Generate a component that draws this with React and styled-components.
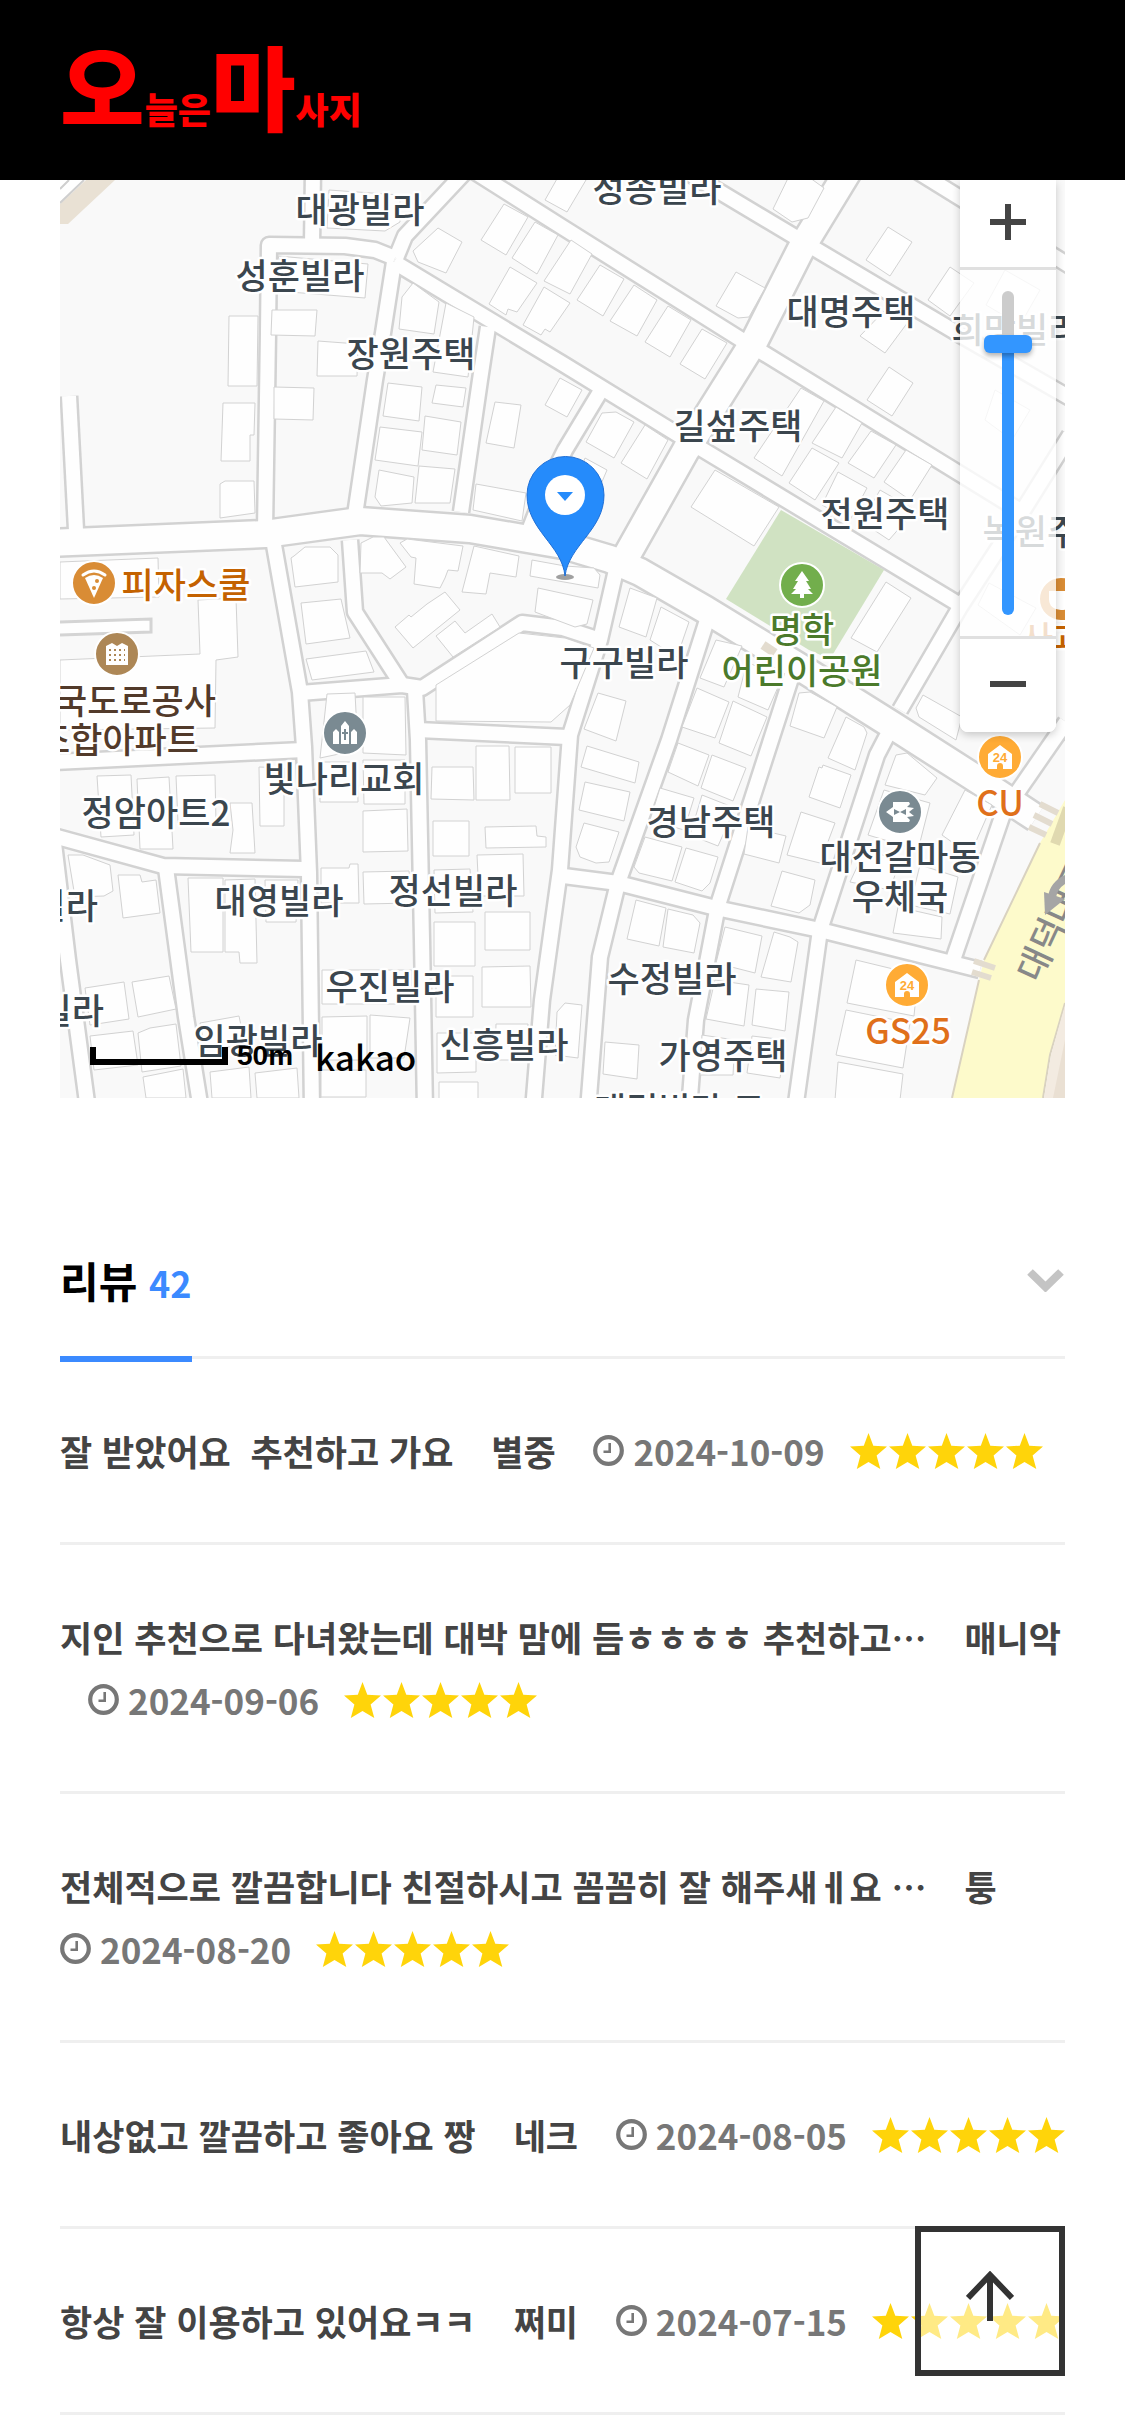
import React, { useState } from 'react'
import styled, { createGlobalStyle } from 'styled-components'

const colors = {
    brand: '#ff0000',
    blue: '#3b8aff',
    zoomBlue: '#3396ff',
    dark: '#333',
    text: '#444',
    grey: '#777',
    line: '#efefef',
    star: '#ffd40a',
    label: '#3b464e',
}

const fontStack = "'Noto Sans CJK KR', 'Noto Sans', sans-serif"

const GlobalStyle = createGlobalStyle`
    * {
        box-sizing: border-box;
    }

    body {
        margin: 0;
        background: #fff;
        color: ${colors.text};
        font-family: ${fontStack};
    }

    button {
        font-family: inherit;
        cursor: pointer;
    }
`

const Header = styled.header`
    position: sticky;
    top: 0;
    z-index: 10;
    height: 180px;
    padding: 12px 60px 0;
    display: flex;
    align-items: center;
    background: #000;
`

const Logo = styled.a`
    display: flex;
    align-items: baseline;
    color: ${colors.brand};
    font-size: 36px;
    font-weight: 900;
    line-height: 90px;
    text-decoration: none;
`

const LogoBig = styled.span`
    font-size: 92px;
`

const Main = styled.main`
    padding: 0 60px 24px;
`

const MapBox = styled.section`
    position: relative;
    overflow: hidden;
`

const MapDrawing = styled.svg`
    display: block;
    width: 100%;
    height: auto;
    background: #f9f9f9;
`

const MapLabel = styled.text`
    font-family: ${fontStack};
    font-size: 35px;
    font-weight: 500;
    fill: ${props => props.$color || colors.label};
    stroke: #fff;
    stroke-width: 5px;
    stroke-linejoin: round;
    paint-order: stroke;
    text-anchor: ${props => props.$anchor || 'middle'};
`

const ShopNumber = styled.text`
    font-family: 'Liberation Sans', sans-serif;
    font-size: 13px;
    font-weight: 700;
    fill: #ffab35;
    text-anchor: middle;
`

const ZoomPanel = styled.div`
    position: absolute;
    top: 0;
    right: 9px;
    width: 96px;
    display: flex;
    flex-direction: column;
    overflow: hidden;
    background: rgba(255, 255, 255, 0.8);
    border-radius: 0 0 8px 8px;
    box-shadow: 0 3px 8px rgba(0, 0, 0, 0.2);
`

const ZoomButton = styled.button`
    height: ${props => props.$tall ? 93 : 87}px;
    padding: 0 0 3px;
    display: flex;
    align-items: center;
    justify-content: center;
    background: #fff;
    border: 0;
`

const ZoomTrack = styled.div`
    padding: 21px 0;
    display: flex;
    justify-content: center;
    border: solid #e0e0e0;
    border-width: 3px 0;
`

const ZoomRange = styled.input`
    appearance: none;
    writing-mode: vertical-lr;
    direction: rtl;
    width: 48px;
    height: 324px;
    margin: 0;
    background: transparent;

    &::-webkit-slider-runnable-track {
        width: 12px;
        height: 324px;
        border-radius: 6px;
        background: linear-gradient(to top, ${colors.zoomBlue} var(--level), #ccc var(--level));
    }

    &::-webkit-slider-thumb {
        appearance: none;
        width: 48px;
        height: 18px;
        margin-left: -18px;
        border-radius: 6px;
        background: ${colors.zoomBlue};
        box-shadow: 0 3px 5px rgba(0, 0, 0, 0.3);
    }
`

const MapFooter = styled.div`
    position: absolute;
    left: 30px;
    bottom: 20px;
    display: flex;
    align-items: center;
    color: #000;
`

const ScaleBar = styled.span`
    width: 138px;
    height: 18px;
    border: solid #000;
    border-width: 0 6px 6px;
`

const ScaleText = styled.span`
    margin: 0 22px 0 9px;
    font-family: 'Liberation Sans', sans-serif;
    font-size: 28px;
    font-weight: 700;
`

const MapBrand = styled.span`
    font-size: 35px;
    font-weight: 500;
    line-height: 45px;
`

const Reviews = styled.section`
    margin-top: 102px;
`

const ReviewsHead = styled.div`
    padding-top: 48px;
    display: flex;
    align-items: flex-start;
    justify-content: space-between;
    border-bottom: 3px solid ${colors.line};
`

const ReviewsTitle = styled.h2`
    margin: 0 0 -6px;
    padding-bottom: 42px;
    border-bottom: 6px solid ${colors.blue};
    color: #000;
    font-size: 42px;
    font-weight: 700;
    line-height: 63px;
`

const ReviewsCount = styled.span`
    color: ${colors.blue};
    font-size: 36px;
`

const FoldButton = styled.button`
    height: 63px;
    padding: 0;
    display: flex;
    align-items: center;
    background: none;
    border: 0;
`

const ReviewList = styled.ul`
    margin: 0;
    padding: 0;
    list-style: none;
`

const ReviewRow = styled.li`
    padding: 60px 0;
    border-bottom: 3px solid ${colors.line};
    font-size: 35px;
    font-weight: 700;
    line-height: 63px;
`

const ReviewLink = styled.a`
    color: ${colors.text};
    text-decoration: none;
    white-space: pre-wrap;
`

const Gap = styled.span`
    display: inline-block;
    width: 28px;
`

const ReviewDate = styled.time`
    display: inline-flex;
    align-items: center;
    gap: 9px;
    margin-right: 25px;
    color: ${colors.grey};
    vertical-align: top;
    white-space: nowrap;
`

const Stars = styled.span`
    display: inline-flex;
    align-items: center;
    gap: 2px;
    height: 63px;
    margin-right: -8px;
    vertical-align: top;
`

const TopButton = styled.button`
    position: fixed;
    right: 60px;
    bottom: 60px;
    width: 150px;
    height: 150px;
    padding: 0 0 10px;
    display: flex;
    align-items: center;
    justify-content: center;
    background: rgba(255, 255, 255, 0.5);
    border: 6px solid ${colors.dark};
`

// centre lines of the streets, grouped by width
const streets = [
    { width: 16, lines: [
        '313,170 312,246',
        '265,530 268,333 269,245 345,246 375,250 395,258',
        '465,172 405,236 396,258',
        '394,262 383,333 375,380 355,515',
        '488,327 480,380 461,512',
        '69,396 76,530',
        '600,392 565,450 545,490 530,528',
        '274,545 300,692 304,747 309,873 312,1110',
        '350,540 355,612 402,685',
        '300,693 402,685 422,688 522,623 563,628 600,640',
        '415,690 418,740 422,940 425,1110',
        '418,730 567,737',
        '55,762 303,750',
        '50,835 163,866 304,869',
        '53,835 68,960 88,1110',
        '166,868 186,1017 201,1110',
        '616,570 600,640 570,735 560,870 542,1000 533,1110',
        '556,875 618,883 716,908 820,930 980,970',
        '707,620 669,740 618,883 600,957 588,1110',
        '792,675 771,740 718,905 696,1020 689,1110',
        '890,730 877,755 820,930 795,1110',
        '1006,805 953,960',
        '1066,722 1012,800',
        '915,170 1070,266',
        '394,262 563,364 690,442 960,605',
        '475,172 562,227 745,342 765,354 1022,512',
        '650,150 720,192 822,253 957,333 1070,398',
        '1070,435 1022,512 960,607 900,710',
    ] },
    { width: 28, lines: [
        '50,543 265,534 360,521 470,529 563,545 610,559 640,572 706,610 806,671 892,725 975,778 1036,818',
        '627,555 686,450 755,340 802,247 855,160',
    ] },
]

const buildings = [
    '229,316 258,316 257,386 228,386', '272,310 317,310 315,336 271,335', '318,341 358,344 357,376 317,376',
    '274,387 314,388 313,420 274,419', '438,228 462,242 446,273 418,262 413,251', '504,204 528,217 506,255 481,240',
    '535,222 558,235 537,274 512,258', '510,267 537,283 517,312 508,309 506,315 489,304', '544,287 570,303 550,332 545,329 541,335 523,325',
    '571,240 592,254 570,294 544,281', '413,283 439,302 434,334 399,329 402,297', '446,303 474,317 468,377 433,372',
    '329,190 400,195 400,222 385,231 327,228', '278,256 368,264 365,298 290,292', '223,403 255,403 254,435 250,435 250,461 221,461',
    '220,484 225,481 254,481 255,513 220,518', '388,383 422,387 419,421 383,416', '380,427 422,432 418,466 375,460',
    '425,416 461,422 457,455 422,450', '379,470 414,477 412,503 381,506 375,497', '419,466 455,469 450,503 415,503',
    '436,385 466,388 463,407 432,403', '495,402 521,405 514,448 486,443', '476,484 526,493 522,521 473,510',
    '294,556 305,547 330,547 338,555 338,582 295,587 291,558', '301,603 341,599 350,638 306,644', '306,659 366,651 374,672 312,680',
    '361,543 373,537 384,537 406,567 390,579 382,573 360,573', '400,543 407,539 463,546 458,571 448,570 445,578 440,588 414,584 416,558 411,557',
    '474,546 519,556 516,577 490,573 486,594 462,592', '445,592 460,610 413,648 395,627 409,615 411,617 427,604',
    '436,636 455,621 465,633 492,614 500,627 453,657', '532,560 565,566 594,568 600,575 598,588 530,576',
    '538,588 593,600 587,624 575,627 535,612', '436,685 519,633 565,638 594,648 570,705 551,722 436,721',
    '363,697 405,697 406,755 363,753', '327,694 355,693 358,750 320,758', '97,776 131,775 134,835 101,837', '137,779 169,777 173,849 140,849',
    '176,776 215,775 216,823 178,823', '230,803 252,803 255,853 230,853 233,830', '259,767 284,768 284,826 260,826',
    '320,762 357,762 358,802 320,802', '363,811 407,809 408,851 363,852', '363,760 405,760 405,804 364,804',
    '321,868 349,868 350,864 358,864 359,903 321,903', '363,872 409,871 411,903 364,904', '432,767 473,767 474,800 431,799',
    '476,746 509,746 510,800 476,800', '515,747 551,747 551,793 515,793', '433,821 469,821 469,856 433,856',
    '485,827 536,826 537,836 546,837 546,847 486,848', '477,855 523,854 524,896 479,896', '434,870 470,869 473,912 435,913',
    '485,912 530,912 530,950 485,950', '434,922 475,922 475,966 434,966', '482,967 530,966 531,1007 482,1007',
    '436,976 473,976 473,1017 436,1017', '437,1033 476,1033 476,1072 437,1073', '439,1082 478,1082 478,1100 439,1100',
    '496,1024 528,1024 526,1060 495,1060', '565,1003 582,1005 578,1058 555,1055 557,1012', '322,970 412,970 412,1004 322,1004',
    '322,1017 367,1016 367,1060 322,1060', '370,1015 410,1018 404,1058 370,1058', '321,1070 366,1070 366,1097 321,1097',
    '188,878 223,878 223,952 191,952', '225,880 255,879 257,963 240,963 239,952 225,952', '265,880 298,880 296,922 266,922',
    '68,855 83,855 110,865 113,891 104,896 75,897', '118,875 140,875 142,882 156,880 160,913 123,918', '85,988 124,982 129,1019 90,1025',
    '132,982 169,976 176,1009 138,1017', '90,1036 133,1031 138,1065 94,1070', '138,1033 150,1028 176,1024 181,1066 142,1072',
    '143,1077 183,1069 186,1098 146,1098', '210,1072 249,1067 251,1098 212,1098', '255,1073 297,1068 299,1098 257,1098',
    '200,1023 239,1016 245,1045 205,1050', '792,170 806,175 824,188 808,218 792,222 773,209', '562,170 586,180 567,212 545,200',
    '888,227 912,242 890,276 866,260', '736,272 765,288 749,317 738,318 716,306', '885,310 908,322 885,353 860,336',
    '889,367 913,383 892,416 867,400', '950,267 974,283 950,316 928,300', '600,265 624,279 603,316 577,300',
    '634,285 657,300 637,336 610,321', '668,306 691,320 670,357 645,342', '702,329 727,343 705,379 680,364',
    '560,378 582,390 567,417 545,405', '602,413 616,412 634,422 614,458 586,442', '645,425 668,440 647,479 621,463',
    '801,388 824,401 782,476 754,458', '836,407 862,423 842,458 812,443', '871,431 896,445 874,478 848,463',
    '812,448 839,463 815,500 789,483', '906,450 932,465 910,500 884,482', '838,472 867,488 850,520 822,505',
    '715,470 779,507 754,546 691,507', '880,490 915,510 889,540 862,522', '585,458 607,470 590,510 570,500',
    '886,582 911,598 877,652 851,638', '630,588 657,598 646,637 619,627', '661,607 689,622 677,657 650,640',
    '716,640 742,646 724,687 700,678', '747,662 782,678 768,710 738,697', '598,693 626,701 616,741 584,729',
    '587,746 639,762 635,783 581,767', '585,782 630,792 624,821 579,810', '584,823 619,832 609,862 596,863 580,857 576,847',
    '697,688 729,702 715,738 682,727', '733,701 767,717 751,756 719,743', '678,743 709,755 698,786 668,772',
    '712,755 746,768 733,801 701,788', '660,788 694,798 684,830 650,820', '702,795 735,808 718,846 690,835',
    '645,837 682,847 672,881 639,873 634,867', '686,848 718,857 710,883 702,891 675,882', '810,692 837,707 824,738 790,726 799,693',
    '846,717 864,727 867,733 855,770 828,758', '819,767 822,768 823,765 851,775 840,808 809,797', '748,827 786,836 779,863 744,854',
    '801,812 835,823 820,863 787,855', '782,871 815,880 810,905 799,913 771,906', '896,755 907,753 937,778 925,795 885,785',
    '884,790 930,803 918,850 868,835', '965,790 992,805 970,855 942,835', '865,850 900,860 890,890 850,882',
    '920,865 958,877 950,914 910,905', '898,907 942,917 941,939 893,933', '636,900 666,908 659,946 627,939',
    '668,909 693,915 700,923 694,953 663,947', '725,927 762,936 755,973 716,963', '774,932 790,937 798,942 791,982 761,977',
    '715,980 749,985 744,1026 706,1019', '756,989 789,992 785,1031 752,1025', '605,1042 639,1045 637,1079 603,1074',
    '752,1036 786,1040 780,1078 747,1073', '702,1035 735,1040 733,1075 700,1075', '856,960 918,975 914,1016 847,1003',
    '846,1010 910,1023 903,1068 836,1055', '838,1062 903,1074 900,1100 835,1100', '923,695 962,717 956,740 919,717 916,708',
    '989,583 1036,608 1020,635 978,605', '1005,270 1040,290 1020,325 986,305', '995,390 1030,410 1012,440 985,420',
]

const places = [
    { name: '대광빌라', x: 360, y: 223 },
    { name: '성훈빌라', x: 300, y: 289 },
    { name: '장원주택', x: 411, y: 367 },
    { name: '성송빌라', x: 657, y: 202 },
    { name: '대명주택', x: 851, y: 325 },
    { name: '길섶주택', x: 738, y: 439 },
    { name: '전원주택', x: 885, y: 527 },
    { name: '희망빌라', x: 1016, y: 343 },
    { name: '녹원주택', x: 1047, y: 545 },
    { name: '피자스쿨', x: 186, y: 598, color: '#c46200' },
    { name: '한국도로공사', x: 216, y: 714, color: '#523a2a', anchor: 'end' },
    { name: '조합아파트', x: 199, y: 753, color: '#523a2a', anchor: 'end' },
    { name: '빛나리교회', x: 344, y: 792 },
    { name: '정암아트2', x: 156, y: 826 },
    { name: '대영빌라', x: 279, y: 914 },
    { name: '정선빌라', x: 453, y: 904 },
    { name: '우진빌라', x: 390, y: 1000 },
    { name: '임광빌라', x: 258, y: 1054 },
    { name: '신흥빌라', x: 504, y: 1058 },
    { name: '빌라', x: 98, y: 919, anchor: 'end' },
    { name: '빌라', x: 104, y: 1024, anchor: 'end' },
    { name: '구구빌라', x: 624, y: 676 },
    { name: '명학', x: 802, y: 643, color: '#4b7a2b' },
    { name: '어린이공원', x: 802, y: 684, color: '#4b7a2b' },
    { name: '경남주택', x: 711, y: 835 },
    { name: '대전갈마동', x: 900, y: 870 },
    { name: '우체국', x: 900, y: 910 },
    { name: '수정빌라', x: 672, y: 992 },
    { name: '가영주택', x: 723, y: 1069 },
    { name: '대림빌라 로', x: 594, y: 1123, anchor: 'start' },
    { name: '사과', x: 1021, y: 652, color: '#c46200', anchor: 'start' },
    { name: 'CU', x: 1000, y: 816, color: '#e0701a' },
    { name: 'GS25', x: 908, y: 1044, color: '#e0701a' },
]

const reviews = [
    { title: '잘 받았어요\u00a0 추천하고 가요', author: '별중', date: '2024-10-09' },
    { title: '지인 추천으로 다녀왔는데 대박 맘에 듬ㅎㅎㅎㅎ 추천하고…', author: '매니악', date: '2024-09-06' },
    { title: '전체적으로 깔끔합니다 친절하시고 꼼꼼히 잘 해주새ㅔ요 …', author: '퉁', date: '2024-08-20' },
    { title: '내상없고 깔끔하고 좋아요 짱', author: '네크', date: '2024-08-05' },
    { title: '항상 잘 이용하고 있어요ㅋㅋ', author: '쩌미', date: '2024-07-15' },
]

const Pin = ({ x, y, color, children }) => (
    <g transform={`translate(${x} ${y})`}>
        <circle r="22" fill={color} stroke="#fff" strokeWidth="2" />
        {children}
    </g>
)

const ConvenienceStore = ({ x, y }) => (
    <Pin x={x} y={y} color="#ffab35">
        <path d="M0 -12 L12 -3 V12 H3 V9 A3 3 0 0 0 -3 9 V12 H-12 V-3 Z" fill="#fff" />
        <ShopNumber y="5">24</ShopNumber>
    </Pin>
)

const StreetMap = () => (
    <MapDrawing viewBox="60 180 1005 918" role="img" aria-label="지도">
        {/* town blocks and streets */}
        <polygon points="60,180 86,180 60,204" fill="#fff" />
        <polygon points="86,180 115,180 68,224 60,224 60,204" fill="#e9e1d4" />
        <path d="M60 203 L84 180 M60 189 L69 180" stroke="#cfcfcf" strokeWidth="2" fill="none" />
        {streets.map(group => group.lines.map(line => (
            <polyline key={line} points={line} fill="none" stroke="#d2d2d2" strokeWidth={group.width + 3} strokeLinejoin="round" />
        )))}
        {streets.map(group => group.lines.map(line => (
            <polyline key={line} points={line} fill="none" stroke="#fefefe" strokeWidth={group.width - 2} strokeLinejoin="round" />
        )))}
        <polygon points="781,510 884,570 830,659 809,650 726,599" fill="#d0e2c2" />
        <g fill="#fefefe" stroke="#d2d2d2" strokeWidth="1">
            <polygon points="60,562 158,558 159,597 60,599" />
            <polygon points="198,600 236,598 238,657 216,660 215,728 60,730 60,660 200,654" />
            {buildings.map(points => <polygon key={points} points={points} />)}
        </g>
        <path d="M60 622 L151 619 V632 L60 635" fill="#fefefe" stroke="#d4d4d4" strokeWidth="3" />

        {/* main avenue */}
        <polygon points="1065,800 1040,843 984,960 979,980 952,1098 1043,1098 1050,1055 1065,1003" fill="#fdfacb" />
        <path d="M1040 843 L984 960 M979 980 L952 1098 M1043 1098 L1050 1055 L1065 1003" stroke="#d9d2c0" strokeWidth="2" fill="none" />
        <polygon points="1065,1005 1051,1055 1044,1098 1065,1098" fill="#f3ebe1" />
        <polygon points="1065,1040 1053,1098 1065,1098" fill="#eae0d3" />
        <path d="M1040 804 L1058 813 M1034 815 L1052 824 M1029 827 L1046 835 M974 961 L995 968 M972 972 L991 978" stroke="#e3dccf" strokeWidth="6" />
        <path d="M1068 808 L1055 844" stroke="#e0d9b0" strokeWidth="10" />
        <path d="M763 645 L775 653" stroke="#e3dccf" strokeWidth="9" />
        <text transform="translate(1039 984) rotate(-65)" fill="#888" fontSize="35" fontWeight="500" fontFamily={fontStack}>대덕대로</text>
        <path d="M1068 878 Q1054 884 1052 897" stroke="#a5a5a5" strokeWidth="8" fill="none" />
        <polygon points="1044,892 1045,915 1065,899" fill="#a5a5a5" />

        {places.map(place => (
            <MapLabel key={`${place.name}${place.y}`} x={place.x} y={place.y} $color={place.color} $anchor={place.anchor}>
                {place.name}
            </MapLabel>
        ))}

        <Pin x={94} y={583} color="#d98c35">
            <path d="M-11 -8 Q0 -16 11 -8" fill="none" stroke="#fff" strokeWidth="3" strokeLinecap="round" />
            <path d="M-9 -5 Q0 -11 9 -5 L0 15 Z" fill="#fff" />
            <circle cx="3" cy="-2" r="2" fill="#d98c35" />
            <circle cx="0" cy="5" r="2" fill="#d98c35" />
        </Pin>
        <Pin x={117} y={654} color="#ad8756">
            <path d="M-11 11 V-8 L-5 -11 L0 -8 L5 -11 L11 -8 V11 Z" fill="#fff" />
            <path d="M-8 -4 H8 M-8 1 H8 M-8 6 H8" stroke="#ad8756" strokeWidth="2" strokeDasharray="2 3" />
        </Pin>
        <Pin x={345} y={733} color="#7a8a92">
            <path d="M-4 11 V-7 L0 -12 L4 -7 V11 Z M-12 11 V-1 L-9 -4 L-6 -1 V11 Z M6 11 V-1 L9 -4 L12 -1 V11 Z" fill="#fff" />
            <path d="M0 -4 V7 M-3 0 H3" stroke="#7a8a92" strokeWidth="2" />
        </Pin>
        <Pin x={802} y={585} color="#72ae4c">
            <path d="M0 -14 L7 -4 H4 L9 4 H6 L11 9 H2 V13 H-2 V9 H-11 L-6 4 H-9 L-4 -4 H-7 Z" fill="#fff" />
        </Pin>
        <Pin x={1061} y={599} color="#d98c35">
            <path d="M-12 -8 H12 V4 Q10 11 0 11 Q-12 10 -12 0 Z" fill="#fff" />
        </Pin>
        <Pin x={900} y={812} color="#7a8a92">
            <path d="M-14 0 L-7 -5 V-10 H9 L10 -8 L7 -5 L14 -4 L9 0 L14 4 L7 5 L10 8 L9 10 H-7 V5 Z" fill="#fff" />
            <path d="M-6 -3 L0 0 L-6 3 Z M6 -3 L0 0 L6 3 Z" fill="#7a8a92" />
        </Pin>
        <ConvenienceStore x={1000} y={757} />
        <ConvenienceStore x={907} y={985} />

        {/* shop marker */}
        <ellipse cx="565" cy="577" rx="9" ry="3" fill="#777" opacity="0.7" />
        <path d="M565 576 C562 545 527 530 527 495 A38 38 0 0 1 604 495 C604 530 569 545 565 576 Z" fill="#258bfb" stroke="#1f6fd6" strokeWidth="1" />
        <circle cx="565" cy="495" r="20" fill="#fff" />
        <polygon points="557,492 573,492 565,501" fill="#258bfb" />
    </MapDrawing>
)

const ZoomControl = () => {
    const [level, setLevel] = useState(12)

    return (
        <ZoomPanel>
            <ZoomButton type="button" aria-label="확대" onClick={() => setLevel(Math.min(14, level + 1))}>
                <svg width="36" height="36" viewBox="0 0 36 36">
                    <path d="M18 0 V36 M0 18 H36" stroke="#444" strokeWidth="6" />
                </svg>
            </ZoomButton>
            <ZoomTrack>
                <ZoomRange
                    type="range"
                    aria-label="지도 확대 수준"
                    min="0"
                    max="14"
                    value={level}
                    style={{ '--level': `${level / 14 * 100}%` }}
                    onChange={event => setLevel(Number(event.target.value))}
                />
            </ZoomTrack>
            <ZoomButton type="button" aria-label="축소" $tall onClick={() => setLevel(Math.max(0, level - 1))}>
                <svg width="36" height="36" viewBox="0 0 36 36">
                    <path d="M0 18 H36" stroke="#444" strokeWidth="6" />
                </svg>
            </ZoomButton>
        </ZoomPanel>
    )
}

const ClockIcon = () => (
    <svg width="31" height="31" viewBox="0 0 31 31" fill="none" stroke="currentColor" aria-hidden="true">
        <circle cx="15.5" cy="15.5" r="13.3" strokeWidth="4.2" />
        <path d="M16.7 8 V16.7 H10.5" strokeWidth="2.6" />
    </svg>
)

const StarIcon = () => (
    <svg width="37" height="36" viewBox="0 0 37 36" aria-hidden="true">
        <path d="M18.5 0 L23.3 12.7 L37 13.4 L26.6 22.6 L30.3 36 L18.5 29 L6.8 36 L10.4 22.6 L0 13.4 L13.8 12.7 Z" fill={colors.star} />
    </svg>
)

const Review = ({ title, author, date }) => (
    <ReviewRow>
        <ReviewLink href="#review">{title}</ReviewLink>{' '}
        <Gap />
        <span>{author}</span>{' '}
        <Gap />
        <ReviewDate dateTime={date}><ClockIcon />{date}</ReviewDate>
        <Stars role="img" aria-label="별점 5점">
            {[1, 2, 3, 4, 5].map(n => <StarIcon key={n} />)}
        </Stars>
    </ReviewRow>
)

const App = () => {
    return (
        <div lang="ko">
            <GlobalStyle />
            <Header>
                <Logo href="#home">
                    <LogoBig>오</LogoBig>늘은<LogoBig>마</LogoBig>사지
                </Logo>
            </Header>

            <Main>
                <MapBox>
                    <StreetMap />
                    <ZoomControl />
                    <MapFooter>
                        <ScaleBar />
                        <ScaleText>50m</ScaleText>
                        <MapBrand>kakao</MapBrand>
                    </MapFooter>
                </MapBox>

                <Reviews>
                    <ReviewsHead>
                        <ReviewsTitle>리뷰 <ReviewsCount>42</ReviewsCount></ReviewsTitle>
                        <FoldButton type="button" aria-label="리뷰 접기">
                            <svg width="39" height="24" viewBox="0 0 39 24">
                                <path d="M4 4 L19.5 19 L35 4" fill="none" stroke="#c4c4c4" strokeWidth="8" />
                            </svg>
                        </FoldButton>
                    </ReviewsHead>
                    <ReviewList>
                        {reviews.map(review => <Review key={review.date} {...review} />)}
                    </ReviewList>
                </Reviews>
            </Main>

            <TopButton type="button" aria-label="맨 위로" onClick={() => window.scrollTo(0, 0)}>
                <svg width="48" height="50" viewBox="0 0 48 50" fill="none" stroke={colors.dark}>
                    <path d="M24 4 V50" strokeWidth="6" />
                    <path d="M2 27 L24 4 L46 27" strokeWidth="6" />
                </svg>
            </TopButton>
        </div>
    )
}

export default App
